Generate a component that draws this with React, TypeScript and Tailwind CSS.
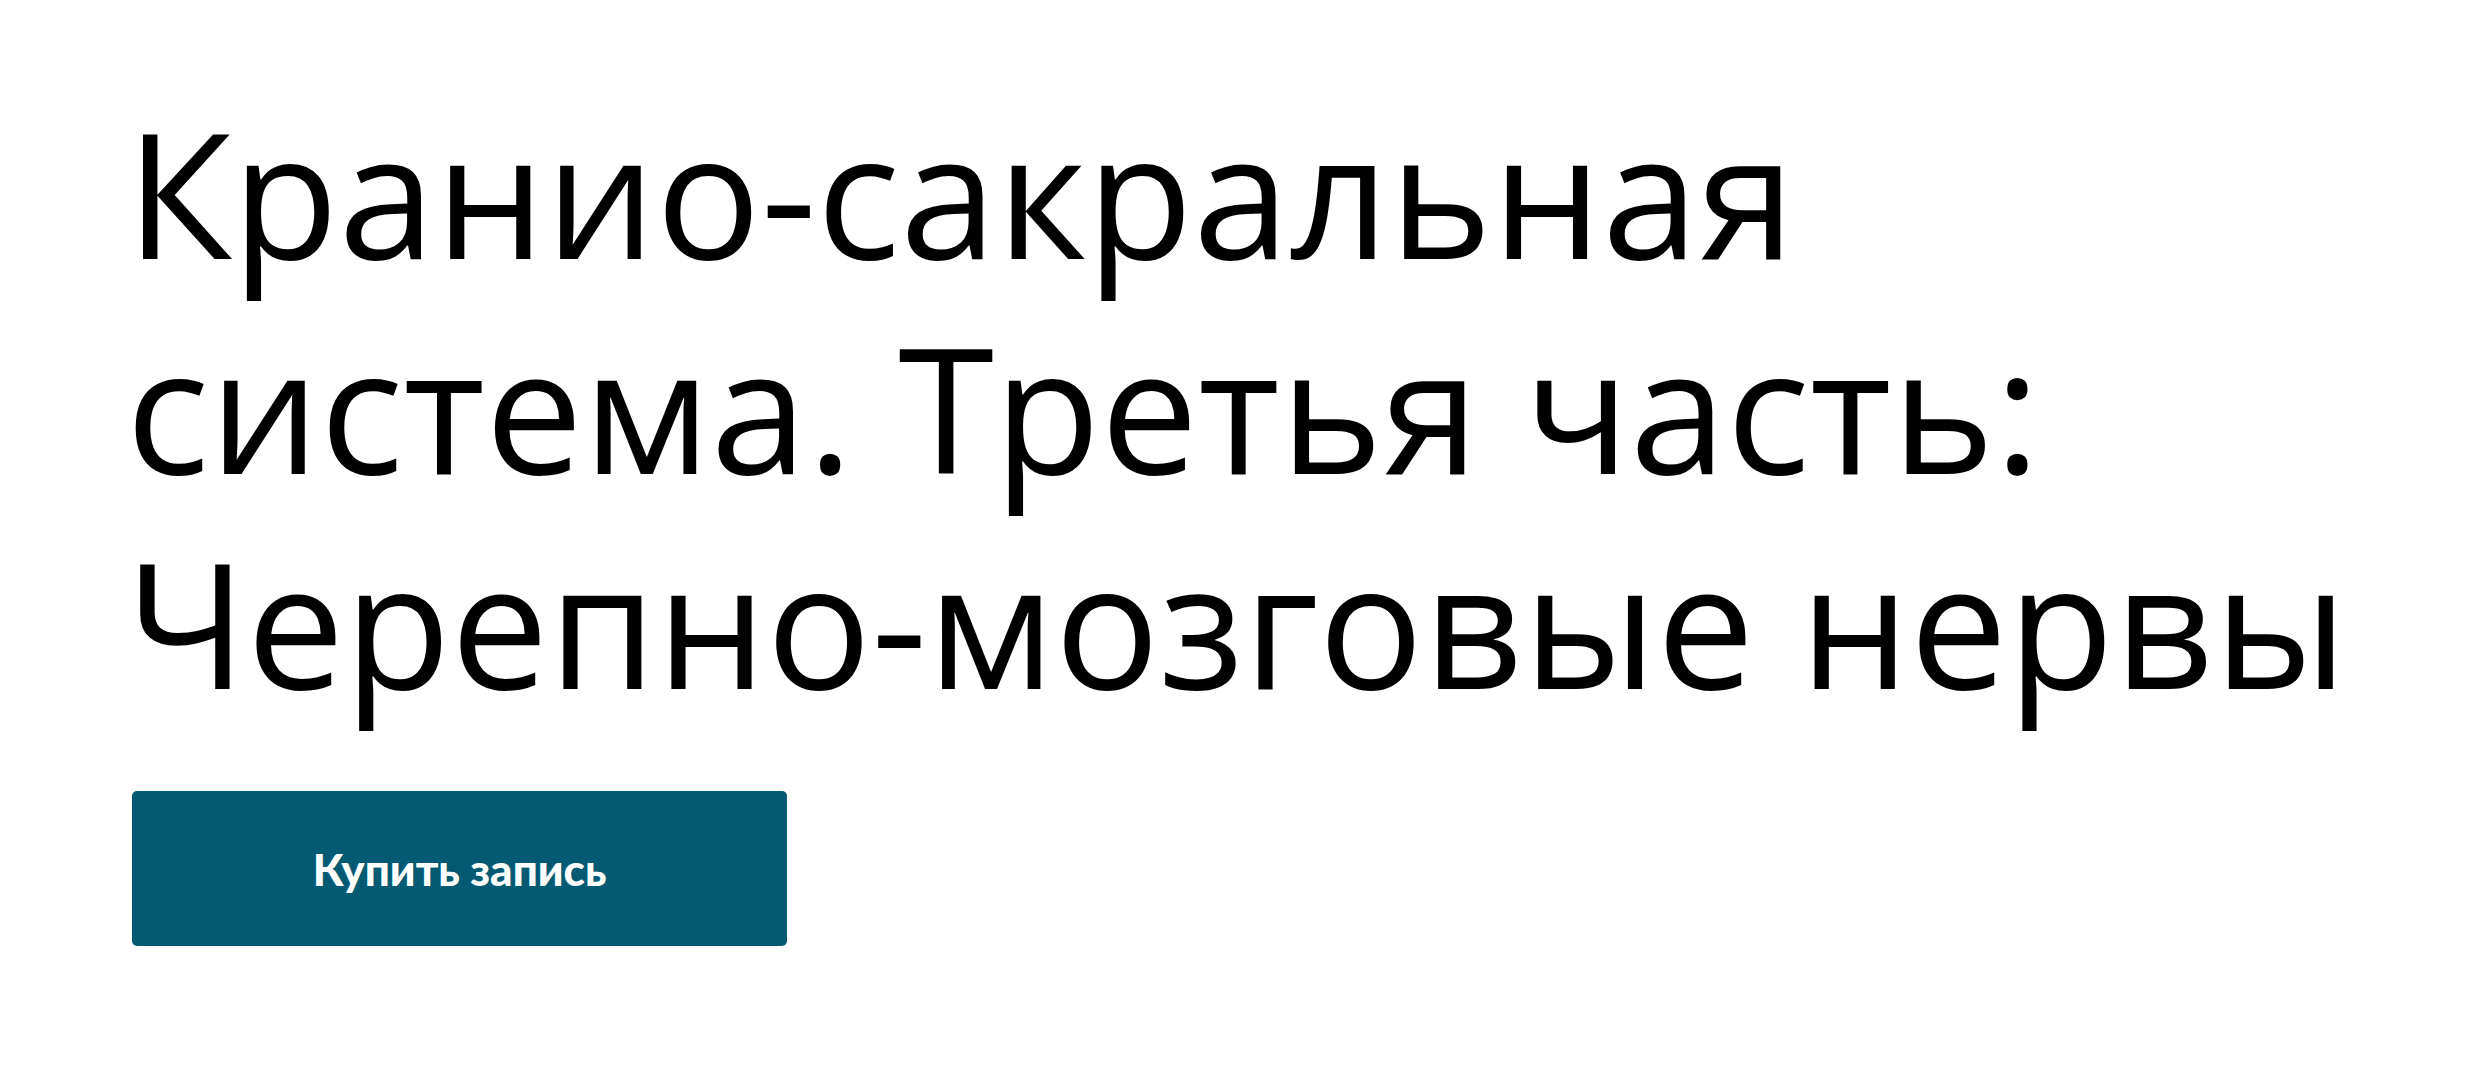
import React from "react";

const titleLines = ["Кранио-сакральная", "система. Третья часть:", "Черепно-мозговые нервы"];

const Lesson = () => {
  return (
    <div className="min-h-screen w-full bg-white">
      <div className="px-[132px] pt-[84px]">
        <h1 className="-ml-[6px] font-['Open_Sans',sans-serif] text-[174px] font-medium leading-[215px] text-black">
          {titleLines.map((line) => (
            <span key={line} className="block whitespace-nowrap">
              {line}
            </span>
          ))}
        </h1>
        <button className="mt-[62px] flex h-[155px] w-[655px] items-center justify-center rounded-[5px] bg-[#035a72]">
          <span className="font-['Lato',sans-serif] text-[44px] font-black leading-none text-white">
            Купить запись
          </span>
        </button>
      </div>
    </div>
  );
};

export default function App() {
  return <Lesson />;
}
